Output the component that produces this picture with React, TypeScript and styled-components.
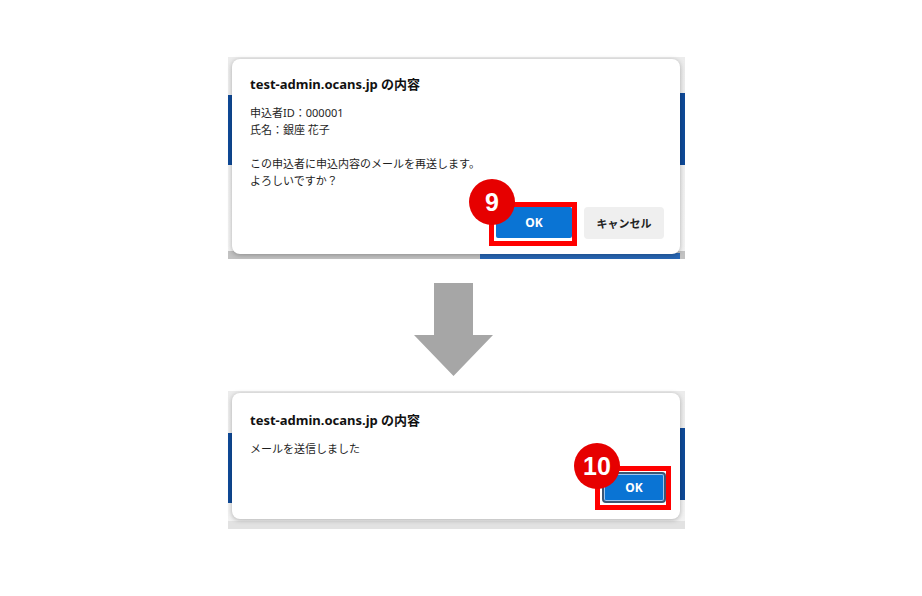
import styled, { createGlobalStyle } from "styled-components";

const GlobalStyle = createGlobalStyle`
  *, *::before, *::after {
    box-sizing: border-box;
  }
  body {
    margin: 0;
    background: #ffffff;
    font-family: "Noto Sans", "Noto Sans CJK JP", sans-serif;
  }
`;

const NAVY = "#0f4a98";

const Page = styled.div`
  display: flex;
  flex-direction: column;
  align-items: flex-start;
  padding: 57px 0 0 228px;
  width: 922px;
  height: 596px;
`;

// The admin page behind the dialog: navy side bars and a darker band at the foot,
// painted as background layers so only the dialog sits in the box.
const Shot = styled.div<{
  $height: number;
  $left: number;
  $right: number;
  $band: number;
  $bandColor: string;
  $bar?: boolean;
}>`
  display: flex;
  flex-direction: column;
  width: 457px;
  height: ${(p) => p.$height}px;
  padding: 2px 5px 0 4px;
  background:
    linear-gradient(${NAVY}, ${NAVY}) no-repeat left 0 top ${(p) => p.$left}px / 12px 70px,
    linear-gradient(${NAVY}, ${NAVY}) no-repeat right 0 top ${(p) => p.$right}px / 12px 72px,
    ${(p) =>
      p.$bar
        ? `linear-gradient(#2766b4, #2766b4) no-repeat left 252px bottom 0 / 200px ${p.$band - 2}px,`
        : ""}
    linear-gradient(${(p) => p.$bandColor}, ${(p) => p.$bandColor}) no-repeat left 0 bottom 0 / 100% ${(p) => p.$band}px,
    linear-gradient(#ececec, #f3f3f3);
`;

const Dialog = styled.div<{ $top: number; $bottom: number }>`
  display: flex;
  flex-direction: column;
  width: 448px;
  padding: ${(p) => p.$top}px 16px ${(p) => p.$bottom}px 18px;
  background: #ffffff;
  border-radius: 8px;
  box-shadow: 0 1px 5px rgba(0, 0, 0, 0.28);
`;

const Title = styled.div`
  font-size: 13px;
  font-weight: 700;
  line-height: 20px;
  color: #111;
`;

const Message = styled.div`
  margin-top: 9.5px;
  font-size: 11px;
  line-height: 17px;
  color: #1e1e1e;
  white-space: pre-line;
`;

const Actions = styled.div<{ $gap: number }>`
  display: flex;
  justify-content: flex-end;
  gap: 12px;
  margin-top: ${(p) => p.$gap}px;
`;

const ButtonSlot = styled.div`
  position: relative;
  display: flex;
`;

const Button = styled.button<{ $primary?: boolean; $focused?: boolean; $w: number; $h: number }>`
  width: ${(p) => p.$w}px;
  height: ${(p) => p.$h}px;
  border: none;
  border-radius: ${(p) => (p.$primary ? 2 : 4)}px;
  background: ${(p) => (p.$primary ? "#0a74d4" : "#efefef")};
  color: ${(p) => (p.$primary ? "#ffffff" : "#222")};
  font-family: inherit;
  font-size: ${(p) => (p.$primary ? 12 : 11)}px;
  font-weight: 700;
  padding: 0;
  ${(p) =>
    p.$focused &&
    `
    outline: 2px solid #3b5573;
    outline-offset: 0;
    box-shadow: inset 0 0 0 1px #9fc6ee;
  `}
`;

// red frame drawn over the button that the step refers to
const Highlight = styled.div<{ $inset: string }>`
  position: absolute;
  inset: ${(p) => p.$inset};
  border: 5px solid #ff0000;
  pointer-events: none;
`;

const StepBadge = styled.div<{ $x: number; $y: number }>`
  position: absolute;
  left: ${(p) => p.$x}px;
  top: ${(p) => p.$y}px;
  width: 46px;
  height: 46px;
  margin: -23px 0 0 -23px;
  border-radius: 50%;
  background: #e60000;
  color: #ffffff;
  display: flex;
  align-items: center;
  justify-content: center;
  font-family: "Liberation Sans", Arial, sans-serif;
  font-size: 25px;
  font-weight: 700;
  z-index: 2;
`;

const Arrow = styled.svg`
  display: block;
  margin: 24px 0 15px 186px;
`;

export default function App() {
  return (
    <>
      <GlobalStyle />
      <Page>
        <Shot $height={202} $left={38} $right={36} $band={8} $bandColor="#c2c2c2" $bar>
          <Dialog $top={15} $bottom={15}>
            <Title>test-admin.ocans.jp の内容</Title>
            <Message>
              {"申込者ID：000001\n氏名：銀座 花子\n\nこの申込者に申込内容のメールを再送します。\nよろしいですか？"}
            </Message>
            <Actions $gap={18.5}>
              <ButtonSlot>
                <Button $primary $w={76} $h={31}>OK</Button>
                <Highlight $inset="-5px -5px -7px -7px" />
                <StepBadge $x={-4} $y={-5}>9</StepBadge>
              </ButtonSlot>
              <Button $w={80} $h={32}>キャンセル</Button>
            </Actions>
          </Dialog>
        </Shot>

        <Arrow width="79" height="93" viewBox="0 0 79 93">
          <polygon points="20,0 59,0 59,52 79,52 39.5,93 0,52 20,52" fill="#a6a6a6" />
        </Arrow>

        <Shot $height={138} $left={42} $right={37} $band={8} $bandColor="#e2e2e2">
          <Dialog $top={17} $bottom={18}>
            <Title>test-admin.ocans.jp の内容</Title>
            <Message>メールを送信しました</Message>
            <Actions $gap={17.5}>
              <ButtonSlot>
                <Button $primary $focused $w={60} $h={27}>OK</Button>
                <Highlight $inset="-8px -7px -9px -9px" />
                <StepBadge $x={-7} $y={-8}>10</StepBadge>
              </ButtonSlot>
            </Actions>
          </Dialog>
        </Shot>
      </Page>
    </>
  );
}
